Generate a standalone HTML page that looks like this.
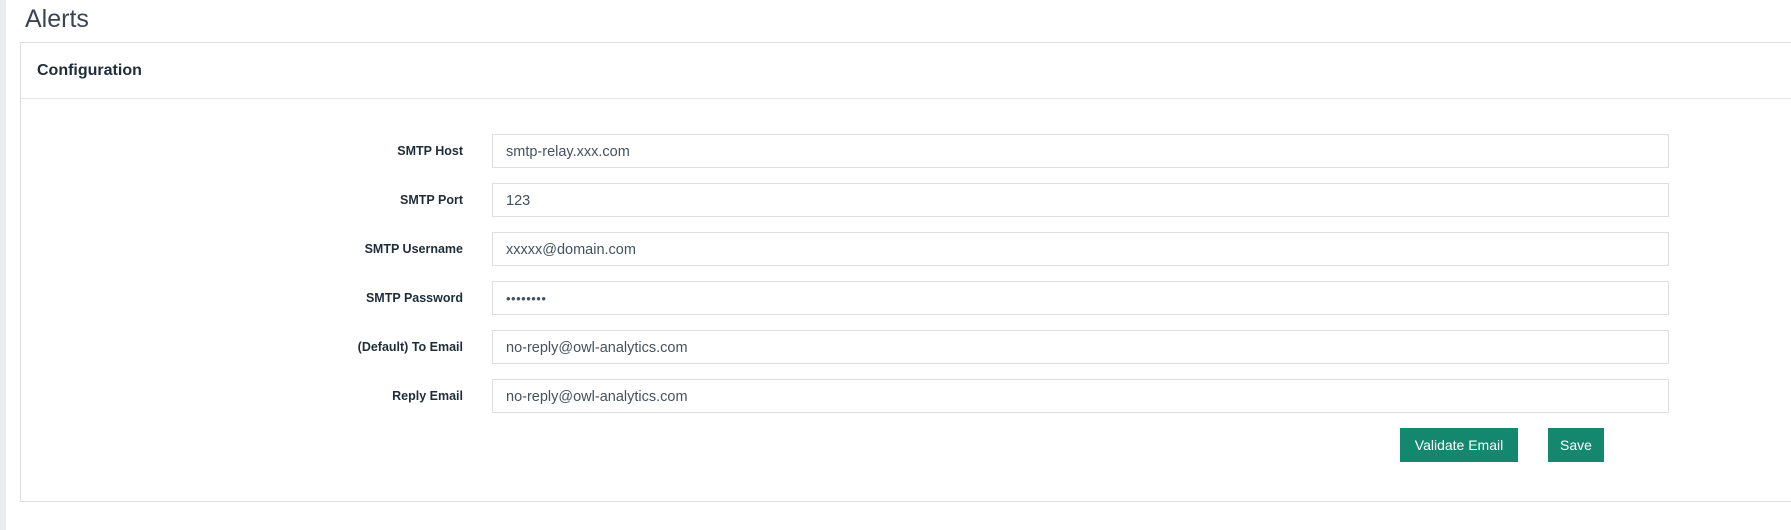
<!DOCTYPE html>
<html><head><meta charset="utf-8"><style>
*{box-sizing:border-box;margin:0;padding:0}
body{width:1791px;height:530px;background:#fff;font-family:"Liberation Sans",sans-serif;position:relative;overflow:hidden;color:#1f2d3a}
.strip{position:absolute;left:0;top:0;width:6px;height:530px;background:#ebedf0}
h1{position:absolute;left:25px;top:5px;font-size:25px;font-weight:normal;color:#3a4550}
.panel{position:absolute;left:20px;top:42px;width:1800px;height:460px;border:1px solid #dcdee0}
.hdr{position:absolute;left:0;top:0;right:0;height:56px;border-bottom:1px solid #e3e5e7}
.hdr span{position:absolute;left:16px;top:19px;font-size:16px;font-weight:bold;color:#1f2d3a}
.lbl{position:absolute;width:300px;text-align:right;font-size:12.5px;font-weight:bold;color:#1f2d3a}
.inp{position:absolute;left:492px;width:1177px;height:34px;border:1px solid #dcdee0;font-size:14.5px;color:#44525e;padding:9px 0 0 13px}
.btn{position:absolute;top:428px;height:34px;background:#14876f;color:#fff;font-size:14px;text-align:center;line-height:34px}
</style></head><body>
<div class="strip"></div>
<h1>Alerts</h1>
<div class="panel"><div class="hdr"><span>Configuration</span></div></div>
<div class="lbl" style="top:144px;left:163px">SMTP Host</div>
<div class="inp" style="top:134px">smtp-relay.xxx.com</div>
<div class="lbl" style="top:193px;left:163px">SMTP Port</div>
<div class="inp" style="top:183px">123</div>
<div class="lbl" style="top:242px;left:163px">SMTP Username</div>
<div class="inp" style="top:232px">xxxxx@domain.com</div>
<div class="lbl" style="top:291px;left:163px">SMTP Password</div>
<div class="inp" style="top:281px;letter-spacing:0.5px;font-size:13px">••••••••</div>
<div class="lbl" style="top:340px;left:163px">(Default) To Email</div>
<div class="inp" style="top:330px">no-reply@owl-analytics.com</div>
<div class="lbl" style="top:389px;left:163px">Reply Email</div>
<div class="inp" style="top:379px">no-reply@owl-analytics.com</div>
<div class="btn" style="left:1400px;width:118px">Validate Email</div>
<div class="btn" style="left:1548px;width:56px">Save</div>
</body></html>
